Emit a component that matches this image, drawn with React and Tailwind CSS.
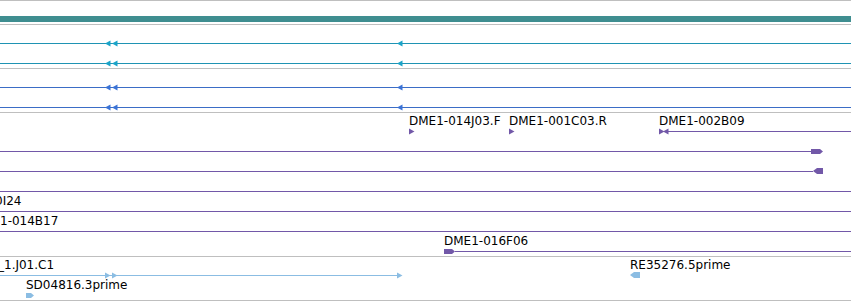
import React from "react";

const TEAL = "#1f93b3";
const TEAL_A = "#1aa3c8";
const BLUE = "#3b6dc6";
const BLUE_A = "#3b73d6";
const PURPLE = "#7258a8";
const LBLUE = "#8bbde3";
const FONT = { fontFamily: '"DejaVu Sans", "Liberation Sans", sans-serif' };

function GrayLine() {
  return <div className="h-px w-full shrink-0 bg-[#bfbfbf]" />;
}

/* Row: 20px tall, feature line sits on its 19th pixel */
function Row({ children, line }) {
  return (
    <div className="relative h-[20px] flex flex-col justify-end pb-px">
      {children}
      <div className="relative h-px flex">{line}</div>
    </div>
  );
}

function Seg({ color, w }) {
  return w ? (
    <div className="h-px shrink-0" style={{ width: w, backgroundColor: color }} />
  ) : (
    <div className="h-px flex-1" style={{ backgroundColor: color }} />
  );
}

function ArrowL({ x, color }) {
  return (
    <svg className="absolute top-[-3px]" style={{ left: x }} width="6" height="7" viewBox="0 0 6 7">
      <polygon points="0,3.5 5.5,0.5 5.5,6.5" fill={color} />
    </svg>
  );
}

function ArrowR({ x, color }) {
  return (
    <svg className="absolute top-[-3px]" style={{ left: x }} width="6" height="7" viewBox="0 0 6 7">
      <polygon points="0,0.5 5.5,3.5 0,6.5" fill={color} />
    </svg>
  );
}

function BoxR({ w, color }) {
  return (
    <svg className="shrink-0 -my-[2px] self-start" width={w} height="5" viewBox={`0 0 ${w} 5`}>
      <polygon points={`0,0 ${w - 3},0 ${w},2.5 ${w - 3},5 0,5`} fill={color} />
    </svg>
  );
}

function BoxL({ w, color }) {
  return (
    <svg className="shrink-0 -my-[3px] self-start" width={w} height="6" viewBox={`0 0 ${w} 6`}>
      <polygon points={`0,3 4,0 ${w},0 ${w},6 4,6`} fill={color} />
    </svg>
  );
}

function Label({ x, children }) {
  return (
    <div
      className="absolute top-[2px] whitespace-nowrap text-[12px] leading-[12px] text-black"
      style={{ left: x, ...FONT }}
    >
      {children}
    </div>
  );
}

function PairTrack({ color, acolor }) {
  return (
    <div className="h-[43px] w-full flex flex-col">
      {[0, 1].map((k) => (
        <Row
          key={k}
          line={
            <>
              <Seg color={color} />
              <ArrowL x={104.5} color={acolor} />
              <ArrowL x={111.5} color={acolor} />
              <ArrowL x={396.5} color={acolor} />
            </>
          }
        />
      ))}
    </div>
  );
}

export default function App() {
  return (
    <div className="w-[851px] h-[301px] bg-white overflow-hidden flex flex-col">
      <GrayLine />
      <div className="h-[23px] w-full pt-[15px] shrink-0">
        <div className="h-[6px] w-full bg-[#3f8e90]" />
      </div>
      <GrayLine />
      <PairTrack color={TEAL} acolor={TEAL_A} />
      <GrayLine />
      <PairTrack color={BLUE} acolor={BLUE_A} />
      <GrayLine />

      {/* purple track */}
      <div className="h-[143px] w-full flex flex-col shrink-0">
        <Row
          line={
            <>
              <ArrowR x={409} color={PURPLE} />
              <ArrowR x={509} color={PURPLE} />
              <div className="w-[664px] shrink-0" />
              <Seg color={PURPLE} />
              <ArrowR x={659} color={PURPLE} />
              <ArrowL x={662.5} color={PURPLE} />
            </>
          }
        >
          <Label x={409}>DME1-014J03.F</Label>
          <Label x={509}>DME1-001C03.R</Label>
          <Label x={659}>DME1-002B09</Label>
        </Row>
        <Row
          line={
            <>
              <Seg color={PURPLE} />
              <BoxR w={12} color={PURPLE} />
              <div className="w-[28px] shrink-0" />
            </>
          }
        />
        <Row
          line={
            <>
              <Seg color={PURPLE} />
              <BoxL w={10} color={PURPLE} />
              <div className="w-[28px] shrink-0" />
            </>
          }
        />
        <Row line={<Seg color={PURPLE} />} />
        <Row line={<Seg color={PURPLE} />}>
          <Label x={-5}>0I24</Label>
        </Row>
        <Row line={<Seg color={PURPLE} />}>
          <Label x={0}>1-014B17</Label>
        </Row>
        <Row
          line={
            <>
              <div className="w-[444px] shrink-0" />
              <BoxR w={11} color={PURPLE} />
              <Seg color={PURPLE} />
            </>
          }
        >
          <Label x={444}>DME1-016F06</Label>
        </Row>
      </div>
      <GrayLine />

      {/* light blue track */}
      <div className="h-[43px] w-full flex flex-col shrink-0">
        <Row
          line={
            <>
              <Seg color={LBLUE} w={400} />
              <ArrowR x={104.5} color={LBLUE} />
              <ArrowR x={111.5} color={LBLUE} />
              <ArrowR x={396.5} color={LBLUE} />
              <div className="w-[230px] shrink-0" />
              <BoxL w={10} color={LBLUE} />
            </>
          }
        >
          <Label x={-2}>_1.J01.C1</Label>
          <Label x={630}>RE35276.5prime</Label>
        </Row>
        <Row
          line={
            <>
              <div className="w-[26px] shrink-0" />
              <BoxR w={8} color={LBLUE} />
            </>
          }
        >
          <Label x={26}>SD04816.3prime</Label>
        </Row>
      </div>
      <GrayLine />
    </div>
  );
}
